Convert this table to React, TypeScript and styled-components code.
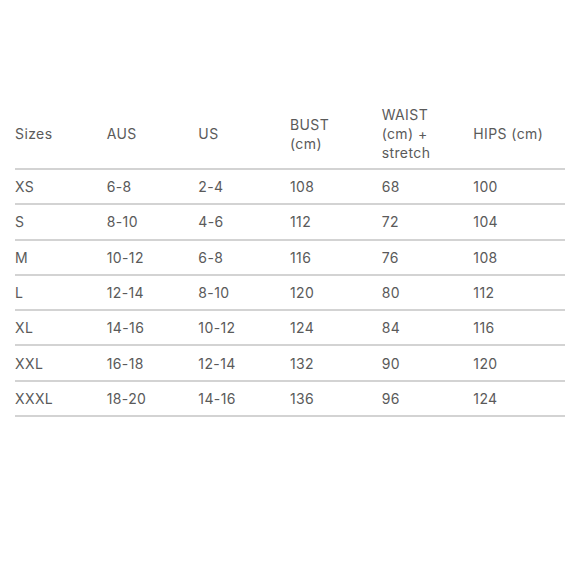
import styled, { createGlobalStyle } from "styled-components";

const GlobalStyle = createGlobalStyle`
  html, body {
    margin: 0;
    padding: 0;
    background: #ffffff;
  }
`;

const Page = styled.div`
  width: 580px;
  height: 580px;
  padding: 100px 15px 0 15px;
  box-sizing: border-box;
  font-family: "Inter", "Liberation Sans", sans-serif;
  color: #5a5a5a;
`;

const Table = styled.table`
  width: 550px;
  border-collapse: collapse;
  table-layout: fixed;
`;

const HeadCell = styled.th<{ $narrow?: boolean }>`
  text-align: left;
  font-weight: 400;
  font-size: 14px;
  line-height: 19px;
  letter-spacing: 0.4px;
  vertical-align: middle;
  padding: 5px ${(p) => (p.$narrow ? "30px" : "14px")} 6px 0;
  border-bottom: 2px solid #d3d3d3;
`;

const Cell = styled.td`
  font-size: 14px;
  letter-spacing: 0.4px;
  height: 33.3px;
  padding: 0;
  vertical-align: middle;
  border-bottom: 2px solid #d3d3d3;
`;

const headers = ["Sizes", "AUS", "US", "BUST (cm)", "WAIST (cm) + stretch", "HIPS (cm)"];

const rows = [
  ["XS", "6-8", "2-4", "108", "68", "100"],
  ["S", "8-10", "4-6", "112", "72", "104"],
  ["M", "10-12", "6-8", "116", "76", "108"],
  ["L", "12-14", "8-10", "120", "80", "112"],
  ["XL", "14-16", "10-12", "124", "84", "116"],
  ["XXL", "16-18", "12-14", "132", "90", "120"],
  ["XXXL", "18-20", "14-16", "136", "96", "124"],
];

export default function App() {
  return (
    <>
      <GlobalStyle />
      <Page>
        <Table>
          <thead>
            <tr>
              {headers.map((h) => (
                <HeadCell key={h} $narrow={h.startsWith("BUST")}>
                  {h}
                </HeadCell>
              ))}
            </tr>
          </thead>
          <tbody>
            {rows.map((r) => (
              <tr key={r[0]}>
                {r.map((c, i) => (
                  <Cell key={i}>{c}</Cell>
                ))}
              </tr>
            ))}
          </tbody>
        </Table>
      </Page>
    </>
  );
}
